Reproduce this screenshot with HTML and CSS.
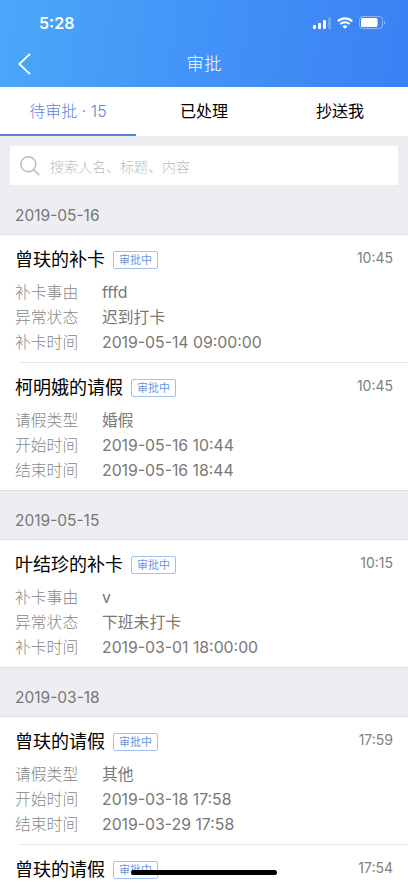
FILE: index.html
```
<!DOCTYPE html>
<html lang="zh-CN">
<head>
    <meta charset="UTF-8">
    <meta name="viewport" content="width=device-width, initial-scale=1.0">
    <title>审批</title>
    <link rel="stylesheet" href="styles.css">
</head>
<body>
<div class="wrap">
    <div class="header">
        <div class="status">
            <span class="clock">5:28</span>
            <svg class="signal" width="18" height="12" viewBox="0 0 18 12" fill="#fff">
                <rect x="0" y="8" width="3" height="4" rx="1"/>
                <rect x="5" y="6" width="3" height="6" rx="1"/>
                <rect x="10" y="3" width="3" height="9" rx="1"/>
                <rect x="15" y="0.5" width="3" height="11.5" rx="1" opacity=".25"/>
            </svg>
            <svg class="wifi" width="16" height="12" viewBox="0 0 16 12" fill="none" stroke="#fff" stroke-width="2.1">
                <path d="M0.8 4.3a10.4 10.4 0 0 1 14.4 0"/>
                <path d="M3.4 7.1a6.6 6.6 0 0 1 9.2 0"/>
                <path d="M8 11.8L5.6 9.4a3.5 3.5 0 0 1 4.8 0z" fill="#fff" stroke="none"/>
            </svg>
            <svg class="battery" width="27" height="13" viewBox="0 0 27 13">
                <rect x="0.5" y="0.5" width="23" height="12" rx="3.2" fill="none" stroke="#fff" stroke-opacity=".4"/>
                <rect x="2" y="2" width="16.5" height="9" rx="1.6" fill="#fff"/>
                <path d="M25 4.5c1.6.6 1.6 3.4 0 4z" fill="#fff" opacity=".45"/>
            </svg>
        </div>
        <div class="nav">
            <svg class="back" width="13" height="22" viewBox="0 0 13 22" fill="none" stroke="#fff" stroke-width="1.8">
                <path d="M12 0.8L1.3 11L12 21.2"/>
            </svg>
            <span class="nav-title">审批</span>
        </div>
    </div>
    <div class="tabs">
        <div class="tab active">待审批 · 15</div>
        <div class="tab">已处理</div>
        <div class="tab">抄送我</div>
    </div>
    <div class="search">
        <div class="search-box">
            <svg width="20" height="20" viewBox="0 0 20 20" fill="none" stroke="#b9b9bd" stroke-width="1.4">
                <circle cx="8.3" cy="8.3" r="7.5"/>
                <path d="M13.8 13.8L19.2 19.2"/>
            </svg>
            <span>搜索人名、标题、内容</span>
        </div>
    </div>

    <div class="date first">2019-05-16</div>
    <div class="group">
        <div class="item">
            <div class="title"><span class="name">曾玞的补卡</span><span class="tag">审批中</span><span class="time">10:45</span></div>
            <div class="row"><span class="label">补卡事由</span><span class="value">fffd</span></div>
            <div class="row"><span class="label">异常状态</span><span class="value">迟到打卡</span></div>
            <div class="row"><span class="label">补卡时间</span><span class="value">2019-05-14 09:00:00</span></div>
        </div>
        <div class="item">
            <div class="title"><span class="name">柯明娥的请假</span><span class="tag">审批中</span><span class="time">10:45</span></div>
            <div class="row"><span class="label">请假类型</span><span class="value">婚假</span></div>
            <div class="row"><span class="label">开始时间</span><span class="value">2019-05-16 10:44</span></div>
            <div class="row"><span class="label">结束时间</span><span class="value">2019-05-16 18:44</span></div>
        </div>
    </div>

    <div class="date">2019-05-15</div>
    <div class="group">
        <div class="item">
            <div class="title"><span class="name">叶结珍的补卡</span><span class="tag">审批中</span><span class="time">10:15</span></div>
            <div class="row"><span class="label">补卡事由</span><span class="value">v</span></div>
            <div class="row"><span class="label">异常状态</span><span class="value">下班未打卡</span></div>
            <div class="row"><span class="label">补卡时间</span><span class="value">2019-03-01 18:00:00</span></div>
        </div>
    </div>

    <div class="date">2019-03-18</div>
    <div class="group">
        <div class="item">
            <div class="title"><span class="name">曾玞的请假</span><span class="tag">审批中</span><span class="time">17:59</span></div>
            <div class="row"><span class="label">请假类型</span><span class="value">其他</span></div>
            <div class="row"><span class="label">开始时间</span><span class="value">2019-03-18 17:58</span></div>
            <div class="row"><span class="label">结束时间</span><span class="value">2019-03-29 17:58</span></div>
        </div>
        <div class="item">
            <div class="title"><span class="name">曾玞的请假</span><span class="tag">审批中</span><span class="time">17:54</span></div>
        </div>
    </div>
    <div class="home-bar"></div>
</div>
</body>
</html>
```

FILE: styles.css
```
*{
    box-sizing:border-box;
}
body{
    margin:0;
    background:#fff;
    font-family:Inter,"Noto Sans CJK SC",sans-serif;
    font-size:16px;
    color:#000;
}
.wrap{
    position:relative;
    height:883px;
    overflow:hidden;
}
svg{
    display:block;
    flex:none;
}

/* 顶部 */
.header{
    height:87px;
    background:linear-gradient(100deg,#4ba8f8 0%,#4294f7 48%,#3b80f4 100%);
    color:#fff;
}
.status{
    display:flex;
    align-items:center;
    height:45px;
    padding:0 22px 0 39px;
}
.clock{
    flex:1;
    font-size:16px;
    font-weight:600;
}
.wifi{
    margin:0 6px 0 6px;
}
.nav{
    display:flex;
    align-items:center;
    height:38px;
    padding:0 18px;
}
.nav-title{
    flex:1;
    padding-right:13px;
    text-align:center;
    font-size:17.5px;
    font-weight:300;
    line-height:38px;
}

.tabs{
    display:flex;
    height:49px;
    background:#fff;
}
.tab{
    flex:1;
    text-align:center;
    line-height:48px;
    border-bottom:2px solid #fff;
}
.tab.active{
    color:#5b83dc;
    border-color:#5b83dc;
    font-weight:300;
}

.search{
    padding:10px 10px 0;
    background:#eeedf2;
}
.search-box{
    display:flex;
    align-items:center;
    height:39px;
    padding-left:10px;
    background:#fff;
    color:#bcbcc0;
    font-size:14px;
    font-weight:300;
}
.search-box span{
    margin-left:10px;
}

/* 列表 */
.date{
    height:50px;
    padding:6px 15px 0;
    background:#eeedf2;
    border-top:1px solid #e0e0e3;
    border-bottom:1px solid #e0e0e3;
    color:#777;
    font-size:15.5px;
    line-height:48px;
}
.date.first{
    border-top-color:#eeedf2;
}
.item{
    height:127px;
    padding:12px 15px 0;
}
.item:not(:last-child){
    height:128px;
    background:linear-gradient(#e6e6e8,#e6e6e8) 19px 100%/100% 1px no-repeat;
}
.title{
    display:flex;
    align-items:center;
    height:26px;
    margin-bottom:7px;
}
.name{
    font-size:18px;
    line-height:26px;
}
.tag{
    width:45px;
    height:18px;
    margin-left:8px;
    border:1px solid #a3bff0;
    border-radius:2px;
    color:#6a93e2;
    font-size:11px;
    line-height:16px;
    text-align:center;
}
.time{
    margin-left:auto;
    color:#808080;
    font-size:14px;
    line-height:22px;
    margin-bottom:4px;
}
.row{
    display:flex;
    height:25px;
    line-height:25px;
    font-size:15.8px;
}
.label{
    width:87px;
    color:#888;
    font-weight:300;
}
.value{
    color:#777;
}

.home-bar{
    position:absolute;
    left:131px;
    bottom:8px;
    width:146px;
    height:5px;
    border-radius:3px;
    background:#000;
}
```
